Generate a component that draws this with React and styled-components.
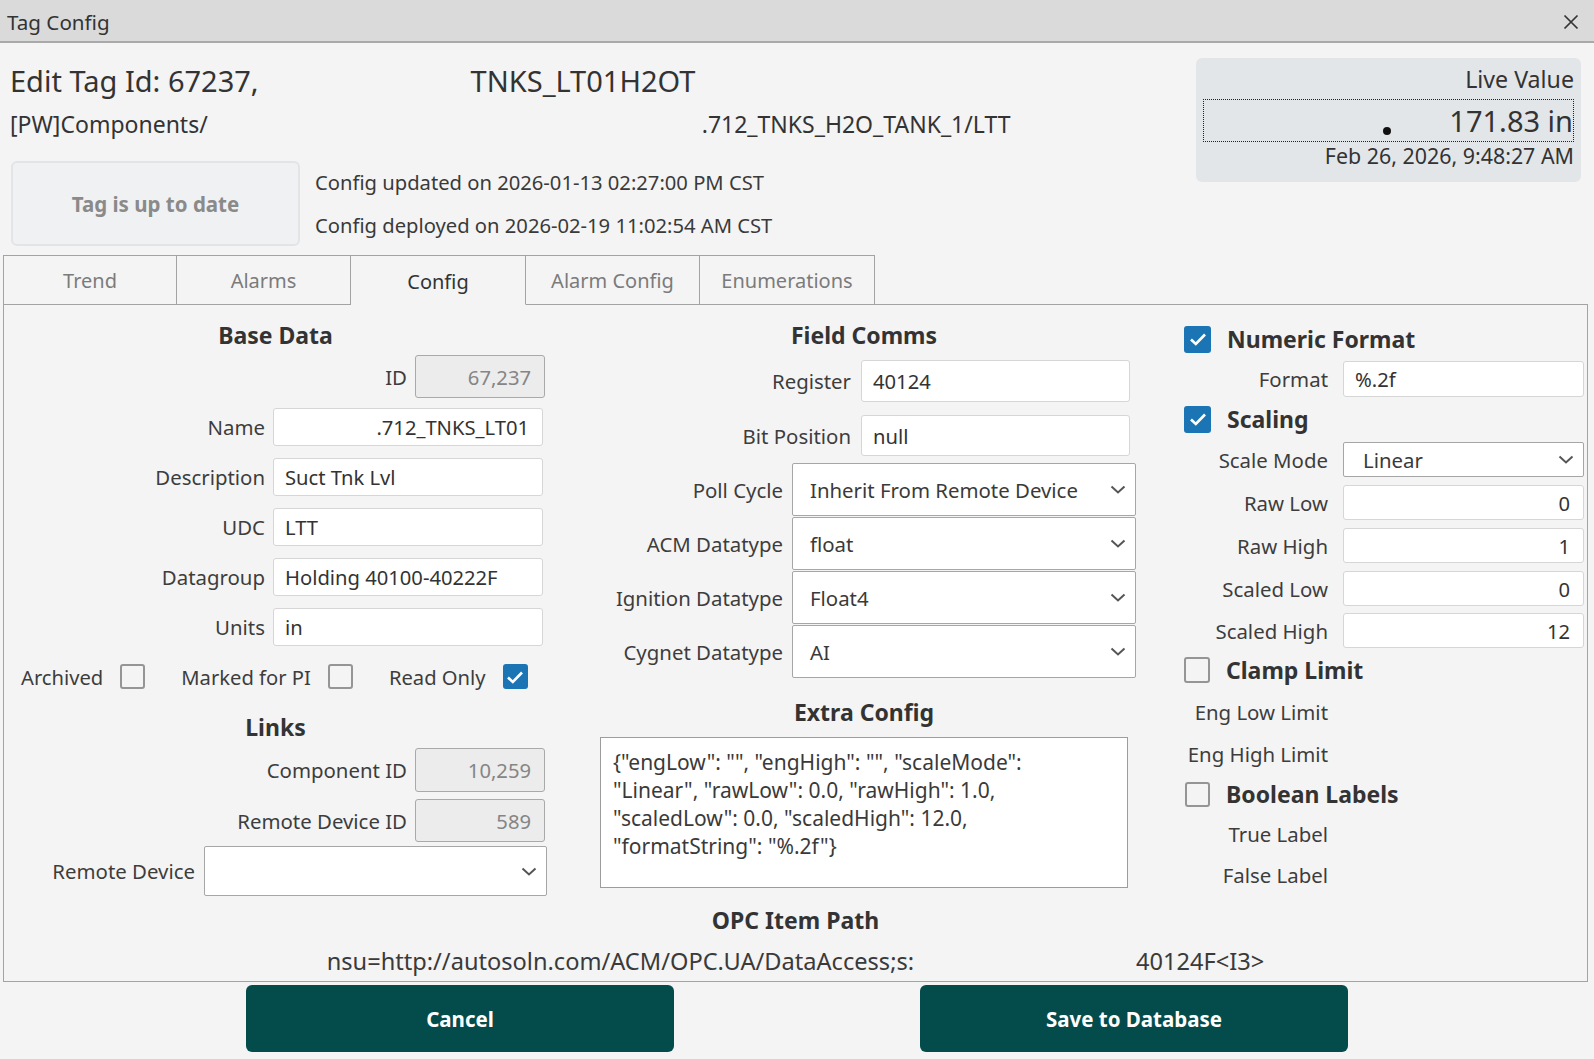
import React from "react"
import styled, { createGlobalStyle } from "styled-components"

const GlobalStyle = createGlobalStyle`
  html, body {
    margin: 0;
    padding: 0;
    background: #f4f4f4;
  }
  body {
    font-family: "Noto Sans", "Open Sans", sans-serif;
    color: #333;
  }
  * {
    box-sizing: border-box;
  }
`

const Window = styled.div`
  width: 1594px;
  height: 1059px;
  display: flex;
  flex-direction: column;
  background: #f4f4f4;
  overflow: hidden;
`

const TitleBar = styled.div`
  height: 43px;
  flex-shrink: 0;
  display: flex;
  align-items: center;
  justify-content: space-between;
  padding: 2px 14px 0 7px;
  background: #dadada;
  border-bottom: 2px solid #a9a9a9;
  font-size: 20.6px;
  color: #333;
`

const CloseButton = styled.div`
  width: 18px;
  height: 18px;
  display: flex;
  align-items: center;
  justify-content: center;
`

const Header = styled.div`
  height: 212px;
  flex-shrink: 0;
  display: flex;
  justify-content: space-between;
  padding: 0 13px 0 10px;
`

const HeaderLeft = styled.div`
  display: flex;
  flex-direction: column;
  padding-top: 20px;
`

const TitleLine = styled.div`
  display: flex;
  font-size: 29px;
  line-height: 36px;
  color: #333;
  white-space: nowrap;
`

const PathLine = styled.div`
  display: flex;
  margin-top: 10px;
  font-size: 23px;
  line-height: 30px;
  color: #333;
  white-space: nowrap;
`

const Spacer = styled.span`
  display: inline-block;
  width: ${(p) => p.$w}px;
  flex-shrink: 0;
`

const StatusRow = styled.div`
  display: flex;
  align-items: center;
  gap: 15px;
  margin-top: 22px;
`

const StatusBox = styled.div`
  width: 289px;
  height: 85px;
  margin-left: 1px;
  display: flex;
  align-items: center;
  justify-content: center;
  background: #f0f1f3;
  border: 2px solid #e2e4e7;
  border-radius: 6px;
  font-size: 20.5px;
  font-weight: 700;
  color: #8a8a8a;
`

const ConfigDates = styled.div`
  display: flex;
  flex-direction: column;
  gap: 15px;
  font-size: 20.2px;
  line-height: 28px;
  color: #3a3a3a;
`

const LiveBox = styled.div`
  width: 385px;
  height: 124px;
  margin-top: 15px;
  padding: 6px 7px 0;
  display: flex;
  flex-direction: column;
  align-items: stretch;
  background: #e3e6e9;
  border-radius: 6px;
  text-align: right;
  color: #333;
`

const LiveLabel = styled.div`
  font-size: 23.2px;
  line-height: 30px;
`

const LiveValue = styled.div`
  height: 43px;
  margin-top: 5px;
  display: flex;
  align-items: center;
  justify-content: flex-end;
  border: 1px dotted #222;
  font-size: 29px;
  line-height: 1;
`

const QualityDot = styled.span`
  width: 8px;
  height: 8px;
  margin: 20px 58px 0 0;
  border-radius: 50%;
  background: #111;
`

const LiveDate = styled.div`
  font-size: 21.4px;
  line-height: 28px;
`

const TabRow = styled.div`
  height: 50px;
  flex-shrink: 0;
  display: flex;
  padding-left: 3px;
`

const Tab = styled.div`
  width: ${(p) => p.$w}px;
  height: 50px;
  display: flex;
  align-items: center;
  justify-content: center;
  padding-top: ${(p) => (p.$active ? 3 : 0)}px;
  border: 1px solid #a3a3a3;
  border-left: ${(p) => (p.$first ? "1px solid #a3a3a3" : "none")};
  border-bottom: ${(p) => (p.$active ? "1px solid transparent" : "1px solid #a3a3a3")};
  font-size: 20px;
  color: ${(p) => (p.$active ? "#333" : "#7b7b7b")};
`

const TabFill = styled.div`
  flex: 1;
  margin-right: 6px;
  border-bottom: 1px solid #a3a3a3;
`

const Panel = styled.div`
  height: 677px;
  flex-shrink: 0;
  margin: 0 6px 0 3px;
  display: flex;
  flex-direction: column;
  border: 1px solid #a3a3a3;
  border-top: none;
`

const Columns = styled.div`
  display: grid;
  grid-template-columns: 557px 580px 1fr;
  align-items: start;
`

const Column = styled.div`
  display: flex;
  flex-direction: column;
  padding: ${(p) => p.$pad};
`

const Heading = styled.div`
  margin-top: ${(p) => p.$mt || 0}px;
  font-size: 23px;
  line-height: 30px;
  font-weight: 700;
  color: #333;
  text-align: center;
  white-space: nowrap;
`

const FieldRow = styled.div`
  display: flex;
  justify-content: flex-end;
  align-items: center;
  gap: ${(p) => p.$gap || 8}px;
  margin-top: ${(p) => p.$mt || 0}px;
  padding-right: ${(p) => p.$pr || 0}px;
`

const Label = styled.div`
  font-size: 20.4px;
  line-height: 28px;
  color: #3d3d3d;
  white-space: nowrap;
`

const InputBox = styled.div`
  width: ${(p) => p.$w}px;
  height: ${(p) => p.$h}px;
  display: flex;
  align-items: center;
  justify-content: ${(p) => (p.$right ? "flex-end" : "flex-start")};
  padding: 0 ${(p) => (p.$right ? 13 : 0)}px 0 ${(p) => (p.$right ? 0 : 11)}px;
  background: ${(p) => (p.$disabled ? "#ececec" : "#fff")};
  border: 1px solid ${(p) => (p.$disabled ? "#a9a9a9" : "#d6d6d6")};
  border-radius: 3px;
  font-size: 20.2px;
  color: ${(p) => (p.$disabled ? "#858585" : "#333")};
  white-space: nowrap;
  overflow: hidden;
`

const SelectBox = styled.div`
  width: ${(p) => p.$w}px;
  height: ${(p) => p.$h}px;
  display: flex;
  align-items: center;
  justify-content: space-between;
  padding: 0 9px 0 ${(p) => p.$pl || 17}px;
  background: #fff;
  border: 1px solid #a6a6a6;
  border-radius: 2px;
  font-size: 20.4px;
  color: #3a3a3a;
  white-space: nowrap;
`

const CheckRow = styled.div`
  display: flex;
  align-items: center;
  height: 25px;
  margin: 18px 0 0 17px;
`

const CheckLabel = styled.span`
  margin-right: 17px;
  font-size: 20.2px;
  color: #3d3d3d;
  white-space: nowrap;
`

const Box = styled.span`
  width: ${(p) => p.$size || 25}px;
  height: ${(p) => p.$size || 25}px;
  flex-shrink: 0;
  display: flex;
  align-items: center;
  justify-content: center;
  margin-right: ${(p) => p.$mr || 0}px;
  border-radius: 3px;
  background: ${(p) => (p.$checked ? "#1b75b5" : "transparent")};
  border: ${(p) => (p.$checked ? "none" : "2px solid #959595")};
`

const TextArea = styled.div`
  height: 151px;
  margin: 10px 8px 0;
  padding: 10px 12px;
  background: #fff;
  border: 1px solid #9d9d9d;
  font-size: 21px;
  line-height: 28px;
  color: #3a3a3a;
  white-space: pre;
  overflow: hidden;
`

const SideRow = styled.div`
  display: grid;
  grid-template-columns: 187px 241px;
  column-gap: 15px;
  align-items: center;
  margin-top: ${(p) => p.$mt || 0}px;
  height: ${(p) => p.$h}px;
`

const SideLabel = styled(Label)`
  text-align: right;
`

const SectionToggle = styled.div`
  height: 30px;
  display: flex;
  align-items: center;
  gap: 16px;
  margin-top: ${(p) => p.$mt || 0}px;
  padding-left: ${(p) => p.$pl || 43}px;
  font-size: 23px;
  font-weight: 700;
  color: #333;
`

const PathText = styled.div`
  display: flex;
  justify-content: center;
  margin-top: 12px;
  font-size: 23.6px;
  line-height: 28px;
  color: #3a3a3a;
  white-space: nowrap;
`

const ButtonRow = styled.div`
  flex: 1;
  display: flex;
  justify-content: space-evenly;
  padding-top: 3px;
`

const Button = styled.div`
  width: 428px;
  height: 67px;
  display: flex;
  align-items: center;
  justify-content: center;
  background: #034c4b;
  border-radius: 6px;
  font-size: 20.5px;
  font-weight: 700;
  color: #fff;
`

const Chevron = () => (
  <svg width="16" height="9" viewBox="0 0 16 9">
    <path d="M1.5 1.5 L8 7.5 L14.5 1.5" fill="none" stroke="#555" strokeWidth="2" />
  </svg>
)

const Check = ({ checked, size, mr }) => (
  <Box $checked={checked} $size={size} $mr={mr}>
    {checked && (
      <svg width="18" height="14" viewBox="0 0 18 14">
        <path d="M2 7.5 L6.8 12 L16 2.5" fill="none" stroke="#fff" strokeWidth="2.6" />
      </svg>
    )}
  </Box>
)

const tabs = [
  { name: "Trend", w: 174 },
  { name: "Alarms", w: 174 },
  { name: "Config", w: 175, active: true },
  { name: "Alarm Config", w: 174 },
  { name: "Enumerations", w: 175 },
]

const extraConfig = `{"engLow": "", "engHigh": "", "scaleMode":
"Linear", "rawLow": 0.0, "rawHigh": 1.0,
"scaledLow": 0.0, "scaledHigh": 12.0,
"formatString": "%.2f"}`

const baseFields = [
  { label: "Name", value: ".712_TNKS_LT01", right: true, mt: 10 },
  { label: "Description", value: "Suct Tnk Lvl", mt: 12 },
  { label: "UDC", value: "LTT", mt: 12 },
  { label: "Datagroup", value: "Holding 40100-40222F", mt: 12 },
  { label: "Units", value: "in", mt: 12 },
]

const selects = [
  { label: "Poll Cycle", value: "Inherit From Remote Device", mt: 7 },
  { label: "ACM Datatype", value: "float", mt: 1 },
  { label: "Ignition Datatype", value: "Float4", mt: 1 },
  { label: "Cygnet Datatype", value: "AI", mt: 1 },
]

const scaling = [
  { label: "Raw Low", value: "0", mt: 8 },
  { label: "Raw High", value: "1", mt: 8 },
  { label: "Scaled Low", value: "0", mt: 8 },
  { label: "Scaled High", value: "12", mt: 7 },
]

export default function App() {
  return (
    <Window>
      <GlobalStyle />
      <TitleBar>
        <span>Tag Config</span>
        <CloseButton>
          <svg width="16" height="16" viewBox="0 0 16 16">
            <path d="M1.5 1.5 L14.5 14.5 M14.5 1.5 L1.5 14.5" stroke="#333" strokeWidth="1.7" />
          </svg>
        </CloseButton>
      </TitleBar>

      <Header>
        <HeaderLeft>
          <TitleLine>
            <span>Edit Tag Id: 67237,</span>
            <Spacer $w={212} />
            <span>TNKS_LT01H2OT</span>
          </TitleLine>
          <PathLine>
            <span>[PW]Components/</span>
            <Spacer $w={494} />
            <span>.712_TNKS_H2O_TANK_1/LTT</span>
          </PathLine>
          <StatusRow>
            <StatusBox>Tag is up to date</StatusBox>
            <ConfigDates>
              <div>Config updated on 2026-01-13 02:27:00 PM CST</div>
              <div>Config deployed on 2026-02-19 11:02:54 AM CST</div>
            </ConfigDates>
          </StatusRow>
        </HeaderLeft>
        <LiveBox>
          <LiveLabel>Live Value</LiveLabel>
          <LiveValue>
            <QualityDot />
            <span>171.83 in</span>
          </LiveValue>
          <LiveDate>Feb 26, 2026, 9:48:27 AM</LiveDate>
        </LiveBox>
      </Header>

      <TabRow>
        {tabs.map((t, i) => (
          <Tab key={t.name} $w={t.w} $active={t.active} $first={i === 0}>
            {t.name}
          </Tab>
        ))}
        <TabFill />
      </TabRow>

      <Panel>
        <Columns>
          <Column $pad="15px 14px 0 0">
            <Heading>Base Data</Heading>
            <FieldRow $mt={5} $pr={2}>
              <Label>ID</Label>
              <InputBox $w={130} $h={43} $disabled $right>67,237</InputBox>
            </FieldRow>
            {baseFields.map((f) => (
              <FieldRow key={f.label} $mt={f.mt} $pr={4}>
                <Label>{f.label}</Label>
                <InputBox $w={270} $h={38} $right={f.right}>{f.value}</InputBox>
              </FieldRow>
            ))}
            <CheckRow>
              <CheckLabel>Archived</CheckLabel>
              <Check mr={36} />
              <CheckLabel>Marked for PI</CheckLabel>
              <Check mr={36} />
              <CheckLabel>Read Only</CheckLabel>
              <Check checked />
            </CheckRow>
            <Heading $mt={23}>Links</Heading>
            <FieldRow $mt={6} $pr={2}>
              <Label>Component ID</Label>
              <InputBox $w={130} $h={44} $disabled $right>10,259</InputBox>
            </FieldRow>
            <FieldRow $mt={7} $pr={2}>
              <Label>Remote Device ID</Label>
              <InputBox $w={130} $h={43} $disabled $right>589</InputBox>
            </FieldRow>
            <FieldRow $mt={4} $gap={9}>
              <Label>Remote Device</Label>
              <SelectBox $w={343} $h={50}>
                <span />
                <Chevron />
              </SelectBox>
            </FieldRow>
          </Column>

          <Column $pad="15px 5px 0 31px">
            <Heading>Field Comms</Heading>
            <FieldRow $mt={10} $pr={6} $gap={10}>
              <Label>Register</Label>
              <InputBox $w={269} $h={42}>40124</InputBox>
            </FieldRow>
            <FieldRow $mt={13} $pr={6} $gap={10}>
              <Label>Bit Position</Label>
              <InputBox $w={269} $h={41}>null</InputBox>
            </FieldRow>
            {selects.map((s) => (
              <FieldRow key={s.label} $mt={s.mt} $gap={9}>
                <Label>{s.label}</Label>
                <SelectBox $w={344} $h={53}>
                  <span>{s.value}</span>
                  <Chevron />
                </SelectBox>
              </FieldRow>
            ))}
            <Heading $mt={19}>Extra Config</Heading>
            <TextArea>{extraConfig}</TextArea>
          </Column>

          <Column $pad="19px 3px 0 0">
            <SectionToggle>
              <Check checked size={27} />
              <span>Numeric Format</span>
            </SectionToggle>
            <SideRow $mt={7} $h={36}>
              <SideLabel>Format</SideLabel>
              <InputBox $w={241} $h={36}>%.2f</InputBox>
            </SideRow>
            <SectionToggle $mt={7}>
              <Check checked size={27} />
              <span>Scaling</span>
            </SectionToggle>
            <SideRow $mt={8} $h={35}>
              <SideLabel>Scale Mode</SideLabel>
              <SelectBox $w={241} $h={35} $pl={19}>
                <span>Linear</span>
                <Chevron />
              </SelectBox>
            </SideRow>
            {scaling.map((s) => (
              <SideRow key={s.label} $mt={s.mt} $h={35}>
                <SideLabel>{s.label}</SideLabel>
                <InputBox $w={241} $h={35} $right>{s.value}</InputBox>
              </SideRow>
            ))}
            <SectionToggle $mt={7}>
              <Check size={26} />
              <span>Clamp Limit</span>
            </SectionToggle>
            <SideRow $mt={13} $h={28}>
              <SideLabel>Eng Low Limit</SideLabel>
            </SideRow>
            <SideRow $mt={14} $h={28}>
              <SideLabel>Eng High Limit</SideLabel>
            </SideRow>
            <SectionToggle $mt={11} $pl={44}>
              <Check size={25} />
              <span>Boolean Labels</span>
            </SectionToggle>
            <SideRow $mt={11} $h={28}>
              <SideLabel>True Label</SideLabel>
            </SideRow>
            <SideRow $mt={13} $h={28}>
              <SideLabel>False Label</SideLabel>
            </SideRow>
          </Column>
        </Columns>

        <Heading $mt={9}>OPC Item Path</Heading>
        <PathText>
          <span>nsu=http://autosoln.com/ACM/OPC.UA/DataAccess;s:</span>
          <Spacer $w={222} />
          <span>40124F&lt;I3&gt;</span>
        </PathText>
      </Panel>

      <ButtonRow>
        <Button>Cancel</Button>
        <Button>Save to Database</Button>
      </ButtonRow>
    </Window>
  )
}
